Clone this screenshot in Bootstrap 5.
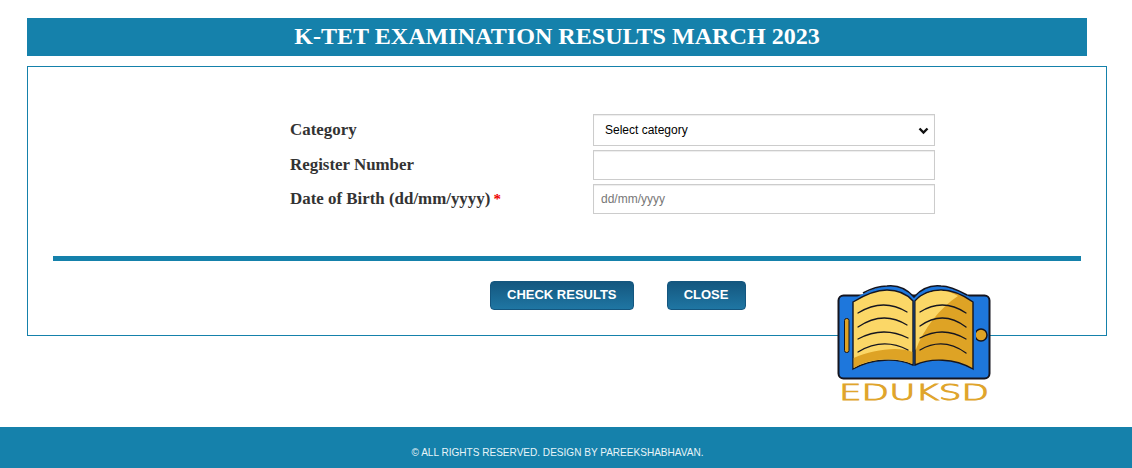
<!DOCTYPE html>
<html lang="en">
<head>
  <meta charset="UTF-8">
  <title>K-TET Examination Results March 2023</title>
  <link href="https://cdn.jsdelivr.net/npm/bootstrap@5.3.0/dist/css/bootstrap.min.css" rel="stylesheet">
  <style>
    html, body { height: 468px; overflow: hidden; }
    body { background: #fff; font-family: "Liberation Sans", Arial, sans-serif; position: relative; }
    .page-wrap { padding: 18px 25px 0 27px; }
    .title-bar { width: 1060px; height: 38px; background: #1581ab; color: #fff; text-align: center; font: bold 24.1px/36px "Liberation Serif", serif; margin: 0 0 10px; }
    .result-panel { height: 270px; border: 1px solid #1581ab; padding: 47px 25px 0; }
    .form-line { margin-bottom: 4px; }
    .form-line > label { width: 303px; padding-left: 237px; box-sizing: content-box; font: bold 16.9px "Liberation Serif", serif; color: #333; white-space: nowrap; }
    .field-box { width: 342px; height: 30px; border: 1px solid #ccc; border-radius: 0; font-size: 12px; padding: 0 11px; color: #000; box-shadow: inset 0 1px 1px rgba(0,0,0,.075); }
    select.field-box { height: 32px; background-size: 11px 9px; background-position: right 5px center; background-image: url("data:image/svg+xml,%3csvg xmlns='http://www.w3.org/2000/svg' viewBox='0 0 11 9'%3e%3cpath fill='none' stroke='%23111' stroke-width='2.4' d='M1.5 2.5l4 4 4-4'/%3e%3c/svg%3e"); }
    input.field-box { padding: 0 7px; }
    input.field-box::placeholder { color: #777; }
    .req { color: #e00; font-size: 15px; margin-left: -1px; }
    .blue-rule { height: 5px; background: #1581ab; margin: 42px 0 20px; }
    .btn-row { padding-left: 437px; gap: 33px; }
    .act-btn { height: 29px; padding: 0 16px 1px; font-weight: bold; font-size: 13px; color: #fff; border: 1px solid #14567f; border-radius: 4px; background: linear-gradient(#14577f, #1f76a3); }
    .act-btn:hover { color: #fff; }
    .close-btn { width: 79px; }
    .site-foot { position: absolute; left: 0; right: 0; bottom: 0; height: 41px; background: #1581ab; color: #e8f4f8; font-size: 10.05px; text-align: center; padding: 18px 17px 0 0; }
    .book-logo { position: absolute; left: 836px; top: 284px; width: 156px; height: 124px; }
  </style>
</head>
<body>
  <div class="page-wrap">
    <h1 class="title-bar">K-TET EXAMINATION RESULTS MARCH 2023</h1>
    <div class="result-panel">
      <form>
        <div class="d-flex align-items-center form-line">
          <label for="cat">Category</label>
          <select id="cat" class="form-select field-box"><option>Select category</option></select>
        </div>
        <div class="d-flex align-items-center form-line">
          <label for="reg">Register Number</label>
          <input id="reg" type="text" class="form-control field-box">
        </div>
        <div class="d-flex align-items-center form-line">
          <label for="dob">Date of Birth (dd/mm/yyyy) <span class="req">*</span></label>
          <input id="dob" type="text" class="form-control field-box" placeholder="dd/mm/yyyy">
        </div>
        <div class="blue-rule"></div>
        <div class="d-flex btn-row">
          <button type="button" class="btn act-btn">CHECK RESULTS</button>
          <button type="button" class="btn act-btn close-btn">CLOSE</button>
        </div>
      </form>
    </div>
  </div>

  <svg class="book-logo" viewBox="0 0 156 124" aria-label="EDUKSD">
    <rect x="2.5" y="11.5" width="151" height="83" rx="5" fill="#1e77dc" stroke="#15151f" stroke-width="2"/>
    <rect x="8.5" y="34.5" width="4.5" height="34" rx="2" fill="#dea325" stroke="#15151f" stroke-width="1"/>
    <circle cx="145" cy="51" r="6" fill="#dea325" stroke="#15151f" stroke-width="1.5"/>
    <!-- cover -->
    <path d="M78 13 C70 4 60 1 51 2 C38 3 27 9 15 17 V87 C35 78 60 74 78 83 C96 74 121 78 140 87 V17 C128 9 118 3 105 2 C96 1 86 4 78 13Z" fill="#1e77dc"/>
    <path d="M27 9 C38 3 44 2 51 2 C60 1 70 4 78 13 C86 4 96 1 105 2 C112 2 120 5 131 11" fill="none" stroke="#15151f" stroke-width="1.6"/>
    <!-- left page -->
    <path d="M17 18 C30 10 42 6 51 6 C60 6 70 9 77 17 V81 C62 74 36 74 17 85Z" fill="#fbd767" stroke="#15151f" stroke-width="1.4"/>
    <path d="M17.7 74 C36 66 62 62 76.3 68 V80 C62 73 36 73 17.7 84Z" fill="#dea325"/>
    <!-- right page -->
    <path d="M79 17 C86 9 96 6 105 6 C114 6 126 10 137 18 V85 C118 74 94 74 79 81Z" fill="#dea325" stroke="#15151f" stroke-width="1.4"/>
    <path d="M79.7 17.3 C86 10 96 6.7 105 6.7 C111 6.7 117 9 122 12 C104 24 88 44 79.7 66Z" fill="#fbd767"/>
    <g fill="none" stroke="#15151f" stroke-width="1.3" stroke-linecap="round">
      <path d="M22 29 Q47 13.5 71 28"/>
      <path d="M22 43 Q47 26 71 41"/>
      <path d="M22 55 Q47 41.5 72 54"/>
      <path d="M22 68 Q47 53 72 66"/>
      <path d="M84 28 Q107 13.5 130 29"/>
      <path d="M84 42 Q107 25.5 130 43"/>
      <path d="M84 54 Q107 41.5 130 55"/>
      <path d="M84 66 Q107 52.5 130 69"/>
    </g>
    <text x="3" y="115.5" textLength="150" lengthAdjust="spacingAndGlyphs" font-family="DejaVu Sans, sans-serif" font-weight="200" font-size="21" fill="#e0a52c" stroke="#e0a52c" stroke-width="0.9">EDUKSD</text>
  </svg>

  <footer class="site-foot">© ALL RIGHTS RESERVED. DESIGN BY PAREEKSHABHAVAN.</footer>
  <script src="https://cdn.jsdelivr.net/npm/bootstrap@5.3.0/dist/js/bootstrap.bundle.min.js"></script>
</body>
</html>
